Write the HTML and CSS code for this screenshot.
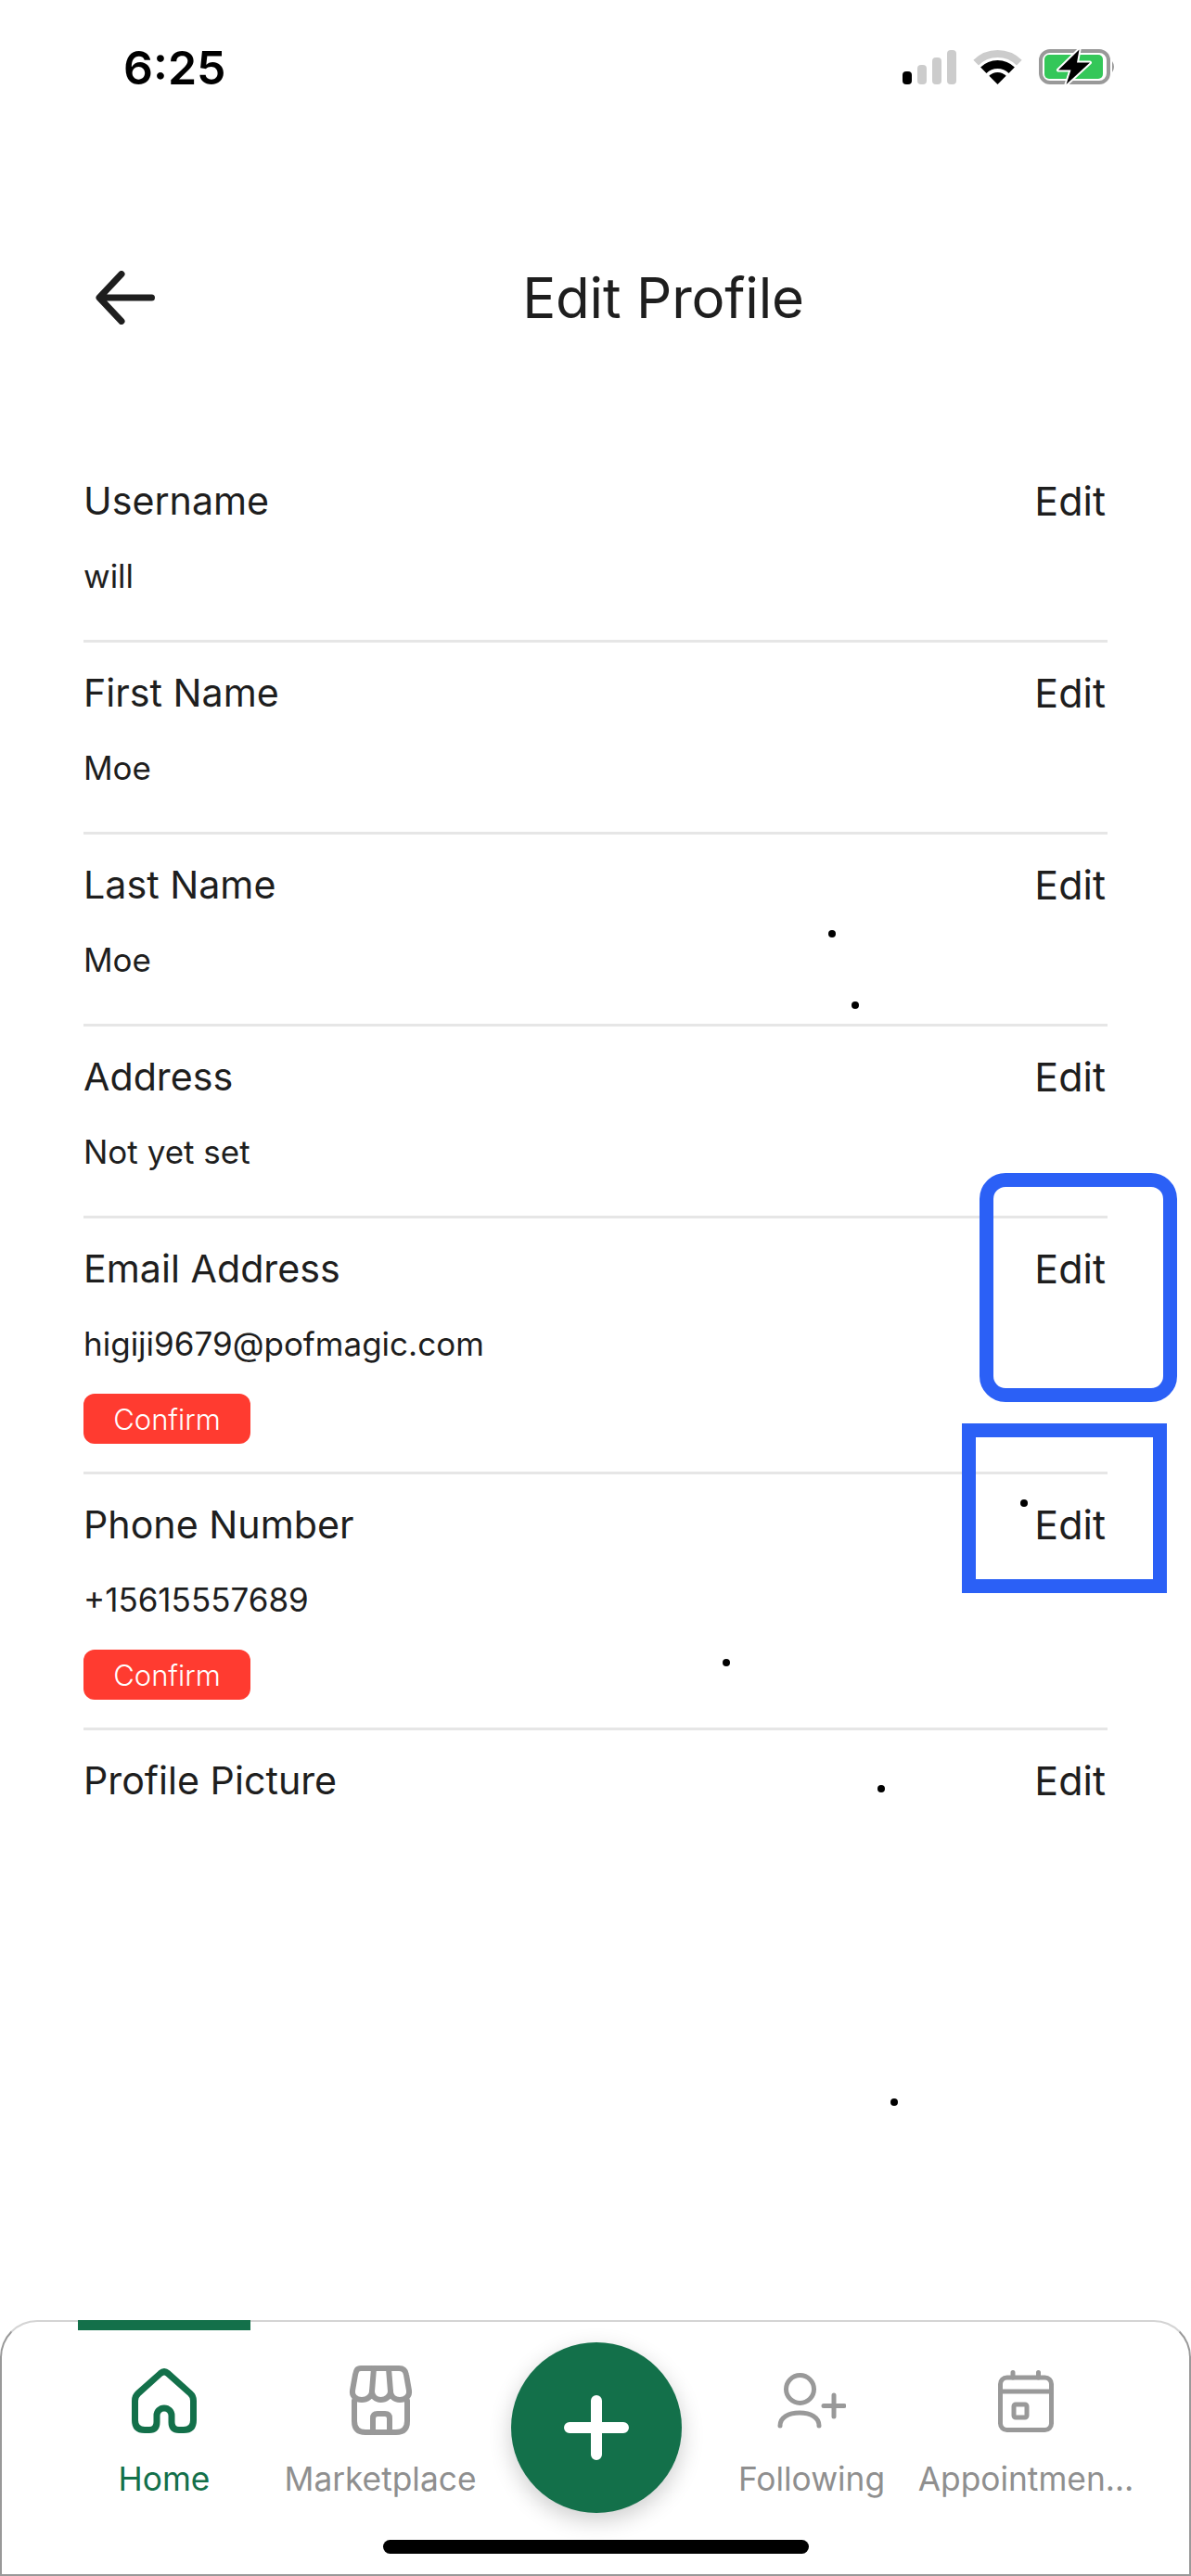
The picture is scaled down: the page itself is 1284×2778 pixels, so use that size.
FILE: index.html
```html
<!DOCTYPE html>
<html lang="en">
<head>
<meta charset="utf-8">
<title>Edit Profile</title>
<link rel="stylesheet" href="styles.css">
</head>
<body>
<div class="page">
  <div class="status">
    <span class="time">6:25</span>
    <svg class="status-icons" width="229" height="38" viewBox="0 0 229 38">
      <rect x="0" y="24" width="10" height="14" rx="4" fill="#000"/>
      <rect x="16" y="17" width="10" height="21" rx="4" fill="#ccc"/>
      <rect x="32" y="9" width="10" height="29" rx="4" fill="#ccc"/>
      <rect x="48" y="1" width="10" height="37" rx="4" fill="#ccc"/>
      <path d="M79.2 14.7A33 33 0 0 1 125.8 14.7" fill="none" stroke="#ccc" stroke-width="8"/>
      <path d="M87.3 22.8A21.5 21.5 0 0 1 117.7 22.8" fill="none" stroke="#000" stroke-width="9"/>
      <path d="M102.5 38L93.3 28.8A13 13 0 0 1 111.7 28.8Z" fill="#000"/>
      <rect x="149" y="2" width="73" height="34" rx="10" fill="none" stroke="#999" stroke-width="4"/>
      <rect x="153" y="6" width="63" height="26" rx="5" fill="#34c759"/>
      <path d="M226 13Q230 19 226 25Z" fill="#999"/>
      <polygon points="190.5,0.5 168,22.5 181.5,22.5 176.5,38 202,14.5 188,14.5" fill="#000" stroke="#fff" stroke-width="4" stroke-linejoin="round" paint-order="stroke"/>
    </svg>
  </div>

  <header class="header">
    <svg class="back" width="64" height="58" viewBox="0 0 64 58">
      <path d="M60.5 29H5M28 3.5L4 29L28 54.5" fill="none" stroke="#1e1e1e" stroke-width="7" stroke-linecap="round" stroke-linejoin="round"/>
    </svg>
    <h1 class="title">Edit Profile</h1>
  </header>

  <main class="list">
    <section class="row">
      <div class="row-head"><span class="label">Username</span><span class="edit">Edit</span></div>
      <p class="value">will</p>
    </section>
    <section class="row">
      <div class="row-head"><span class="label">First Name</span><span class="edit">Edit</span></div>
      <p class="value">Moe</p>
    </section>
    <section class="row">
      <div class="row-head"><span class="label">Last Name</span><span class="edit">Edit</span></div>
      <p class="value">Moe</p>
    </section>
    <section class="row">
      <div class="row-head"><span class="label">Address</span><span class="edit">Edit</span></div>
      <p class="value">Not yet set</p>
    </section>
    <section class="row">
      <div class="row-head"><span class="label">Email Address</span><span class="edit">Edit</span></div>
      <p class="value">higiji9679@pofmagic.com</p>
      <div class="confirm">Confirm</div>
    </section>
    <section class="row">
      <div class="row-head"><span class="label">Phone Number</span><span class="edit">Edit</span></div>
      <p class="value">+15615557689</p>
      <div class="confirm">Confirm</div>
    </section>
    <section class="row row-last">
      <div class="row-head"><span class="label">Profile Picture</span><span class="edit">Edit</span></div>
    </section>
  </main>

  <nav class="tabbar">
    <div class="tab tab-active">
      <span class="indicator"></span>
      <span class="tab-icon">
        <svg width="70" height="70" viewBox="0 0 70 70"><path d="M31 5.5Q35 2 39 5.5L63 27Q66.5 30 66.5 35V56Q66.5 66.5 56 66.5H51Q43 66.5 43 58V51A8 8 0 0 0 27 51V58Q27 66.5 19 66.5H14Q3.5 66.5 3.5 56V35Q3.5 30 7 27Z" fill="none" stroke="#13704a" stroke-width="7" stroke-linejoin="round"/></svg>
      </span>
      <span class="tab-label">Home</span>
    </div>
    <div class="tab">
      <span class="indicator indicator-off"></span>
      <span class="tab-icon">
        <svg width="70" height="76" viewBox="0 0 70 76" fill="none" stroke="#999" stroke-width="6" stroke-linecap="round" stroke-linejoin="round"><path d="M14 3H55Q62 3 63 10L66 27C67 33 62 37 56 37C50 37 46 33 46 28C46 33 41 37 35.5 37C30 37 26 33 26 28C26 33 21 37 15 37C9 37 4 33 5 27L8 10C9 5 10 3 14 3Z"/><path d="M26 28L28 3M46 28L44 3"/><path d="M7 38V60Q7 72 19 72H52Q64 72 64 60V38"/><path d="M27 72V57Q27 52 32 52H40Q45 52 45 57V72"/></svg>
      </span>
      <span class="tab-label">Marketplace</span>
    </div>
    <div class="tab">
      <button class="fab" type="button" aria-label="Add">
        <svg width="70" height="70" viewBox="0 0 70 70"><path d="M35 6V64M6 35H64" fill="none" stroke="#fff" stroke-width="12" stroke-linecap="round"/></svg>
      </button>
    </div>
    <div class="tab">
      <span class="indicator indicator-off"></span>
      <span class="tab-icon">
        <svg width="74" height="60" viewBox="0 0 74 60" fill="none" stroke="#999" stroke-width="5" stroke-linecap="round"><circle cx="24.5" cy="17.5" r="15"/><path d="M3 57C3 48 12 43 24 43C36 43 45 48 45 57"/><path d="M61 24V47M50 35.5H72"/></svg>
      </span>
      <span class="tab-label">Following</span>
    </div>
    <div class="tab">
      <span class="indicator indicator-off"></span>
      <span class="tab-icon">
        <svg width="60" height="67" viewBox="0 0 60 67" fill="none" stroke="#999" stroke-width="5" stroke-linecap="round"><rect x="2.5" y="8" width="55" height="56.5" rx="7"/><path d="M2.5 23H57.5"/><path d="M16 2.5V8M43.5 2.5V8"/><rect x="17" y="37" width="14" height="14" rx="2"/></svg>
      </span>
      <span class="tab-label">Appointmen…</span>
    </div>
  </nav>

  <span class="home-bar"></span>
  <span class="mark mark-rounded"></span>
  <span class="mark mark-square"></span>
  <span class="dot dot-1"></span>
  <span class="dot dot-2"></span>
  <span class="dot dot-3"></span>
  <span class="dot dot-4"></span>
  <span class="dot dot-5"></span>
  <span class="dot dot-6"></span>
</div>
</body>
</html>
```
FILE: styles.css
```css
* { box-sizing: border-box; }
html, body { margin: 0; padding: 0; background: #fff; }
body { font-family: Inter, "Noto Sans", sans-serif; color: #1e1e1e; }

.page {
  position: relative;
  width: 1284px;
  height: 2778px;
  display: flex;
  flex-direction: column;
  overflow: hidden;
  background: #fff;
}

.status {
  height: 150px;
  padding: 54px 82px 0 133px;
  display: flex;
  justify-content: space-between;
  align-items: flex-start;
}
.time { font-size: 50px; font-weight: 600; line-height: 38px; color: #000; }
.status-icons { display: block; margin-top: -1px; }

.header {
  position: relative;
  height: 76px;
  margin: 133px 0 127px;
  display: flex;
  align-items: center;
  justify-content: center;
}
.back { position: absolute; left: 103px; top: 9px; }
.title { margin: 0 0 0 146px; font-size: 60px; font-weight: 400; line-height: 76px; letter-spacing: -.2px; }

.list { padding: 0 90px; }
.row { padding: 30px 0 15px; border-bottom: 3px solid #e6e6e6; }
.row-last { border-bottom: 0; }
.row-head { display: flex; justify-content: space-between; align-items: center; height: 48px; }
.label { font-size: 41.2px; line-height: 48px; }
.edit { font-size: 43px; line-height: 48px; margin-right: 2px; }
.value { margin: 35px 0 32px; font-size: 35px; line-height: 44px; }
.confirm {
  width: 180px;
  height: 54px;
  margin-bottom: 15px;
  background: #ff3b30;
  border-radius: 12px;
  color: #fff;
  font-size: 31px;
  font-weight: 300;
  line-height: 56px;
  text-align: center;
}

.tabbar {
  margin-top: auto;
  height: 276px;
  padding: 0 59px;
  display: grid;
  grid-template-columns: 232px 234px 232px 232px 230px;
  background: #fff;
  border: 2px solid #999;
  border-top-color: #d4d4d4;
  border-radius: 40px 40px 0 0;
}
.tab { display: flex; flex-direction: column; align-items: center; min-width: 0; }
.indicator { width: 186px; height: 11px; margin-top: -2px; background: #13704a; flex: none; }
.indicator-off { background: transparent; }
.tab-icon { height: 76px; margin-top: 38px; display: flex; align-items: center; justify-content: center; }
.tab-icon svg { display: block; }
.tab-label { margin-top: 25px; font-size: 35.3px; line-height: 44px; color: #8f8f8f; white-space: nowrap; }
.tab-active .tab-label { color: #13704a; }

.fab {
  width: 184px;
  height: 184px;
  margin-top: 22px;
  padding: 0;
  border: 0;
  border-radius: 50%;
  background: #13704a;
  box-shadow: 0 8px 24px rgba(0, 0, 0, .2);
  display: flex;
  align-items: center;
  justify-content: center;
}

.home-bar { position: absolute; left: 413px; top: 2739px; width: 459px; height: 15px; border-radius: 8px; background: #000; }

.mark { position: absolute; border: 15px solid #2b60f6; }
.mark-rounded { left: 1056px; top: 1265px; width: 213px; height: 247px; border-radius: 28px; }
.mark-square { left: 1037px; top: 1535px; width: 221px; height: 183px; }

.dot { position: absolute; width: 8px; height: 8px; border-radius: 50%; background: #000; }
.dot-1 { left: 893px; top: 1003px; }
.dot-2 { left: 918px; top: 1080px; }
.dot-3 { left: 1100px; top: 1617px; }
.dot-4 { left: 779px; top: 1789px; }
.dot-5 { left: 946px; top: 1925px; }
.dot-6 { left: 960px; top: 2263px; }
```
